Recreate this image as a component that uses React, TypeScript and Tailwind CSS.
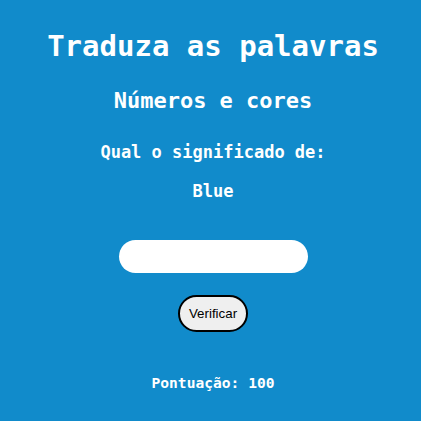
import React, { useState } from 'react';

const mono = "font-['DejaVu_Sans_Mono',monospace]";

const App: React.FC = () => {
  const [answer, setAnswer] = useState('');

  return (
    <div className={`min-h-screen w-full bg-[#118bcb] text-white ${mono} flex flex-col items-center pl-[5px]`}>
      <h1 className="mt-[28px] text-[29px] leading-[36px] font-bold">Traduza as palavras</h1>
      <h2 className="mt-[23px] text-[22px] leading-[28px] font-bold">Números e cores</h2>
      <h3 className="mt-[25px] text-[17px] leading-[24px] font-bold">Qual o significado de:</h3>
      <p className="mt-[15px] text-[17px] leading-[24px] font-bold">Blue</p>

      <input
        type="text"
        value={answer}
        onChange={(e) => setAnswer(e.target.value)}
        className="mt-[37px] h-[33px] w-[189px] rounded-full bg-white px-4 text-black outline-none"
      />

      <button className="mt-[22px] h-[37px] w-[70px] rounded-full border-2 border-black bg-[#efefef] text-[13.33px] text-black font-['Liberation_Sans',Arial,sans-serif]">
        Verificar
      </button>

      <p className="mt-[41px] text-[14.6px] leading-[20px] font-bold">Pontuação: 100</p>
    </div>
  );
};

export default App;
